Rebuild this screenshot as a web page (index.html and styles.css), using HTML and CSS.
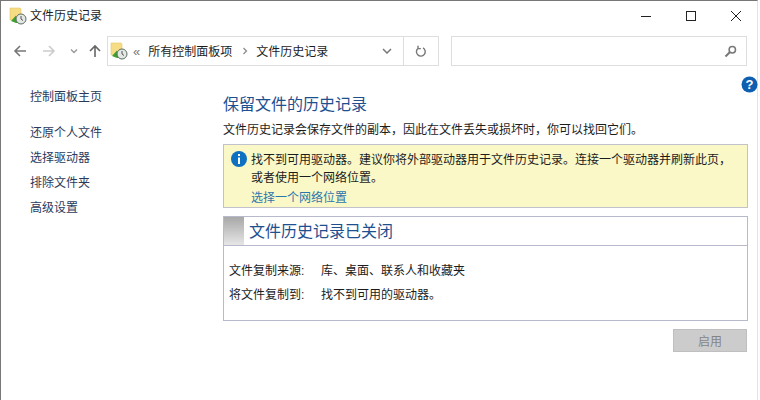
FILE: index.html
```html
<!DOCTYPE html>
<html lang="zh-CN">

<head>
    <title>文件历史记录</title>
    <meta charset="UTF-8" />
    <link rel="stylesheet" href="styles.css">
</head>

<body>
    <div class="window">
        <div class="titlebar">
            <svg class="app-icon" width="18" height="18" viewBox="0 0 18 18">
                <use href="#history-icon" />
            </svg>
            <span class="title-text">文件历史记录</span>
            <div class="win-controls">
                <svg width="12" height="12" viewBox="0 0 12 12">
                    <path d="M1 6.5H11" stroke="#222" stroke-width="1" fill="none" />
                </svg>
                <svg width="12" height="12" viewBox="0 0 12 12">
                    <rect x="1.5" y="1.5" width="9" height="9" stroke="#222" stroke-width="1" fill="none" />
                </svg>
                <svg width="12" height="12" viewBox="0 0 12 12">
                    <path d="M1 1L11 11M11 1L1 11" stroke="#222" stroke-width="1" fill="none" />
                </svg>
            </div>
        </div>

        <div class="navbar">
            <div class="nav-buttons">
                <svg width="14" height="14" viewBox="0 0 14 14">
                    <path d="M13 7H2M7 2L2 7L7 12" stroke="#777" stroke-width="1.6" fill="none" />
                </svg>
                <svg class="nav-forward" width="14" height="14" viewBox="0 0 14 14">
                    <path d="M1 7H12M7 2L12 7L7 12" stroke="#ccc" stroke-width="1.6" fill="none" />
                </svg>
                <svg class="nav-recent" width="8" height="6" viewBox="0 0 8 6">
                    <path d="M1 1.5L4 4.5L7 1.5" stroke="#999" stroke-width="1.4" fill="none" />
                </svg>
                <svg class="nav-up" width="14" height="14" viewBox="0 0 14 14">
                    <path d="M7 13V2M2 7L7 2L12 7" stroke="#666" stroke-width="1.6" fill="none" />
                </svg>
            </div>
            <div class="address">
                <svg class="app-icon" width="18" height="18" viewBox="0 0 18 18">
                    <use href="#history-icon" />
                </svg>
                <span class="crumb-more">«</span>
                <span class="crumb">所有控制面板项</span>
                <svg class="crumb-sep" width="6" height="8" viewBox="0 0 6 8">
                    <path d="M1.5 1L4.5 4L1.5 7" stroke="#888" stroke-width="1.2" fill="none" />
                </svg>
                <span class="crumb">文件历史记录</span>
                <div class="address-drop">
                    <svg width="10" height="6" viewBox="0 0 10 6">
                        <path d="M1 1L5 5L9 1" stroke="#777" stroke-width="1.5" fill="none" />
                    </svg>
                </div>
                <div class="address-refresh">
                    <svg width="12" height="13" viewBox="0 0 12 13">
                        <path d="M3.2 3.2A4.4 4.4 0 1 0 8 2.9M3 0.8V3.6H5.8" stroke="#777" stroke-width="1.4" fill="none" />
                    </svg>
                </div>
            </div>
            <div class="search">
                <svg width="13" height="13" viewBox="0 0 13 13">
                    <circle cx="8.3" cy="4.7" r="3.2" stroke="#777" stroke-width="1.5" fill="none" />
                    <path d="M6 7L1.5 11.5" stroke="#777" stroke-width="2" fill="none" />
                </svg>
            </div>
        </div>

        <div class="help-row">
            <svg width="17" height="17" viewBox="0 0 17 17">
                <circle cx="8.5" cy="8.5" r="8" fill="#0f5fb0" />
                <text x="8.5" y="13" class="help-mark">?</text>
            </svg>
        </div>

        <div class="content">
            <div class="sidebar">
                <a class="side-home">控制面板主页</a>
                <a>还原个人文件</a>
                <a>选择驱动器</a>
                <a>排除文件夹</a>
                <a>高级设置</a>
            </div>

            <div class="main">
                <div class="heading">保留文件的历史记录</div>
                <p class="intro">文件历史记录会保存文件的副本，因此在文件丢失或损坏时，你可以找回它们。</p>

                <div class="notice">
                    <svg class="notice-icon" width="16" height="16" viewBox="0 0 16 16">
                        <circle cx="8" cy="8" r="8" fill="#0e70c0" />
                        <rect x="7" y="3" width="2" height="2" fill="#fff" />
                        <rect x="7" y="6.5" width="2" height="6.5" fill="#fff" />
                    </svg>
                    <div class="notice-text">
                        <p>找不到可用驱动器。建议你将外部驱动器用于文件历史记录。连接一个驱动器并刷新此页，<br>或者使用一个网络位置。</p>
                        <a class="notice-link">选择一个网络位置</a>
                    </div>
                </div>

                <div class="panel">
                    <div class="panel-head">
                        <div class="panel-swatch"></div>
                        <div class="panel-title">文件历史记录已关闭</div>
                    </div>
                    <div class="panel-body">
                        <div class="panel-row"><span class="row-label">文件复制来源:</span><span>库、桌面、联系人和收藏夹</span></div>
                        <div class="panel-row"><span class="row-label">将文件复制到:</span><span>找不到可用的驱动器。</span></div>
                    </div>
                </div>

                <div class="actions">
                    <button class="enable-btn" disabled>启用</button>
                </div>
            </div>
        </div>
    </div>

    <svg class="icon-defs" width="0" height="0">
        <symbol id="history-icon" viewBox="0 0 18 18">
            <path d="M1 1H11L12 2V13H1Z" fill="#f6dc84" stroke="#e8c766" stroke-width="0.6" />
            <path d="M2 14L7 8.5V11.5H10V16H7Z" fill="#3fa02e" />
            <circle cx="12" cy="12" r="5" fill="#e4e8e4" stroke="#5d6b60" stroke-width="1" />
            <path d="M12 9V12L14 13.5" stroke="#444" stroke-width="0.9" fill="none" />
        </symbol>
    </svg>
</body>

</html>
```

FILE: styles.css
```css
* {
    box-sizing: border-box;
}

html,
body {
    margin: 0;
    padding: 0;
    background: #fff;
}

body {
    width: 760px;
    height: 400px;
    overflow: hidden;
    font-family: "Liberation Sans", "Noto Sans CJK SC", sans-serif;
    font-size: 12px;
    color: #1c1c1c;
}

p {
    margin: 0;
}

.window {
    width: 758px;
    height: 400px;
    border-top: 1px solid #777;
    border-left: 1px solid #777;
    border-right: 1px solid #e2e2e2;
}

.icon-defs {
    display: block;
}

/* title bar */
.titlebar {
    display: flex;
    align-items: center;
    height: 30px;
    padding-left: 8px;
}

.title-text {
    margin-left: 3px;
    line-height: 30px;
}

.win-controls {
    display: flex;
    gap: 33px;
    margin-left: auto;
    margin-right: 15px;
    margin-top: 0;
}

/* nav bar */
.navbar {
    display: flex;
    align-items: center;
    height: 30px;
    margin-top: 5px;
}

.nav-buttons {
    display: flex;
    align-items: center;
    width: 106px;
    padding-left: 12px;
}

.nav-forward {
    margin-left: 15px;
}

.nav-recent {
    margin-left: 14px;
}

.nav-up {
    margin-left: 10px;
}

.address {
    display: flex;
    align-items: center;
    width: 332px;
    height: 30px;
    border: 1px solid #dedede;
    padding-left: 2px;
}

.crumb-more {
    margin-left: 5px;
    color: #777;
    font-size: 13px;
}

.crumb {
    margin-left: 8px;
    padding-bottom: 2px;
}

.crumb-sep {
    margin-left: 10px;
}

.crumb-sep + .crumb {
    margin-left: 8px;
}

.address-drop {
    display: flex;
    align-items: center;
    justify-content: center;
    width: 34px;
    height: 28px;
    margin-left: auto;
    border-right: 1px solid #dedede;
}

.address-refresh {
    display: flex;
    align-items: center;
    justify-content: center;
    width: 34px;
    height: 28px;
}

.search {
    display: flex;
    align-items: center;
    justify-content: flex-end;
    width: 296px;
    height: 30px;
    margin-left: 12px;
    border: 1px solid #dedede;
    padding-right: 9px;
}

.help-row {
    display: flex;
    justify-content: flex-end;
    height: 17px;
    margin-top: 10px;
    margin-right: -1px;
}

/* content */
.content {
    display: flex;
}

.sidebar {
    display: flex;
    flex-direction: column;
    width: 222px;
    margin-top: -8px;
    padding-left: 29px;
    color: #2b3a5c;
    line-height: 25px;
}

.side-home {
    margin-bottom: 11px;
}

.main {
    width: 525px;
}

.heading {
    font-size: 16px;
    line-height: 24px;
    color: #1e4f8f;
}

.intro {
    margin-top: 3px;
    line-height: 20px;
}

.notice {
    display: flex;
    height: 64px;
    margin-top: 4px;
    padding: 6px 0 0 7px;
    background: #fbf8c8;
    border: 1px solid #c2c2cc;
}

.notice-icon {
    flex: none;
    margin-top: 0;
}

.notice-text {
    margin-left: 4px;
    line-height: 18px;
}

.notice-link {
    display: block;
    margin-top: 2px;
    color: #2b76ac;
}

.panel {
    height: 105px;
    margin-top: 8px;
    border: 1px solid #b9b9cc;
}

.panel-head {
    display: flex;
    height: 29px;
    border-bottom: 1px solid #b9b9cc;
}

.panel-swatch {
    width: 20px;
    background: linear-gradient(#a8a8a8, #e6e6e6);
}

.panel-title {
    margin-left: 5px;
    font-size: 16px;
    line-height: 30px;
    color: #1e4f8f;
}

.panel-body {
    padding: 13px 0 0 5px;
}

.panel-row {
    display: flex;
    line-height: 24px;
}

.row-label {
    width: 92px;
}

.actions {
    display: flex;
    justify-content: flex-end;
    margin-top: 8px;
}

.enable-btn {
    width: 74px;
    height: 23px;
    margin-right: 1px;
    padding: 0;
    border: 1px solid #bfbfbf;
    background: #cccccc;
    color: #858585;
    font: inherit;
}

.help-mark {
    font-size: 13px;
    font-weight: bold;
    fill: #fff;
    text-anchor: middle;
}
```
